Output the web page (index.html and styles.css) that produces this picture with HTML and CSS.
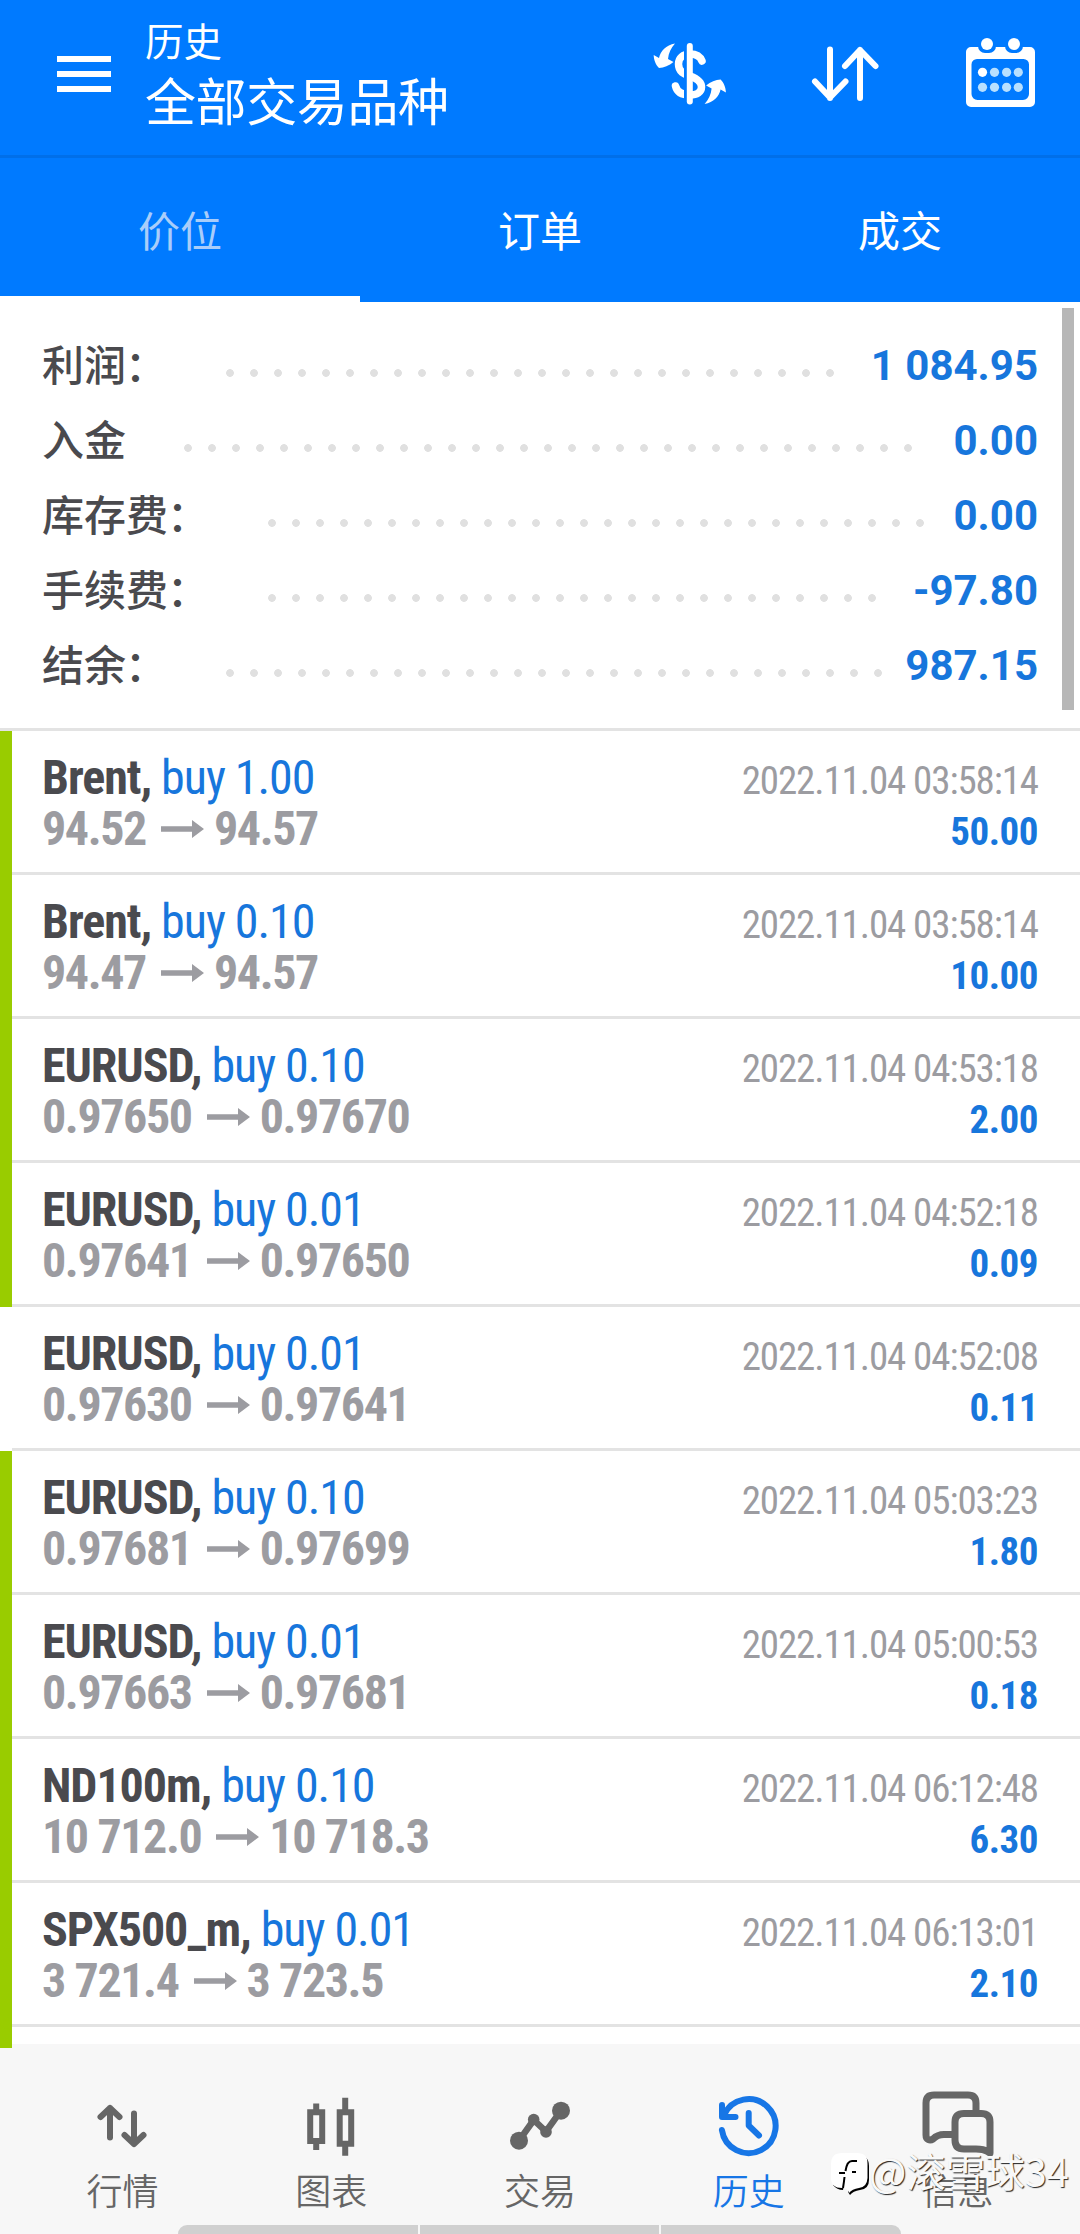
FILE: index.html
```html
<!DOCTYPE html>
<html lang="zh-CN">
<head>
<meta charset="utf-8">
<title>历史</title>
<link rel="stylesheet" href="styles.css">
</head>
<body>
<div class="app">
  <header class="topbar">
    <div class="menu"><i></i><i></i><i></i></div>
    <div class="titles">
      <div class="title">历史</div>
      <div class="subtitle">全部交易品种</div>
    </div>
    <div class="actions">
      <svg width="80" height="72" viewBox="650 38 80 72">
        <path d="M702 61C700 56 695 54 690 54C683 54 678.500 58 678.500 64C678.500 72 684 74 690 76C698 79 701.500 82 701.500 87C701.500 92 697 95 690 95C682 95 677 92 675.500 86" fill="none" stroke="#fff" stroke-width="7.500" stroke-linecap="round"/>
        <path d="M684 45h3v60h-3z" fill="#007aff"/>
        <path d="M689.800 46V101.500" stroke="#fff" stroke-width="6" stroke-linecap="round"/>
        <path id="swap" d="M675 43.500C666 45 660.500 51 659 58L653.700 55C653.700 60 656 65 659 68C664 68 669 65.500 673.500 62L668 59C668.500 53 671 48 675 43.500Z" fill="#fff"/>
        <use href="#swap" transform="rotate(180 689.800 73.700)"/>
      </svg>
      <svg width="80" height="72" viewBox="806 38 80 72">
        <path d="M831 49.500V98M816 81.500L831 97.500L846.500 81.500M861 98V50M846 66L861 50L876.500 66" fill="none" stroke="#fff" stroke-width="6" stroke-linecap="round" stroke-linejoin="round"/>
      </svg>
      <svg width="80" height="72" viewBox="960 38 80 72">
        <path d="M971 47H1030a5 5 0 0 1 5 5V102a5 5 0 0 1-5 5H971a5 5 0 0 1-5-5V52a5 5 0 0 1 5-5ZM977 59a5.500 5.500 0 0 0-5.500 5.500V94a6 6 0 0 0 6 6H1023a6 6 0 0 0 6-6V64.500a5.500 5.500 0 0 0-5.500-5.500Z" fill="#fff" fill-rule="evenodd"/>
        <g fill="#007aff"><rect x="978" y="36" width="18" height="17" rx="7"/><rect x="1005" y="36" width="18" height="17" rx="7"/></g>
        <g fill="#fff"><circle cx="987" cy="44" r="6"/><circle cx="1014" cy="44" r="6"/><circle cx="982.500" cy="72.300" r="4.600"/></g>
        <g fill="#b8e0ff"><circle cx="994.500" cy="72.300" r="4.600"/><circle cx="1006.600" cy="72.300" r="4.600"/><circle cx="1018.300" cy="72.300" r="4.600"/><circle cx="982.500" cy="87.300" r="4.600"/><circle cx="994.500" cy="87.300" r="4.600"/><circle cx="1006.600" cy="87.300" r="4.600"/><circle cx="1018.300" cy="87.300" r="4.600"/></g>
      </svg>
    </div>
  </header>
  <nav class="tabs">
    <div class="tab active">价位</div>
    <div class="tab">订单</div>
    <div class="tab">成交</div>
  </nav>
  <section class="summary">
    <div class="sum"><span>利润<em>：</em></span><i style="--dots:26"></i><b>1 084.95</b></div>
    <div class="sum"><span>入金</span><i style="--dots:31"></i><b>0.00</b></div>
    <div class="sum"><span>库存费<em>：</em></span><i style="--dots:28"></i><b>0.00</b></div>
    <div class="sum"><span>手续费<em>：</em></span><i style="--dots:26"></i><b>-97.80</b></div>
    <div class="sum"><span>结余<em>：</em></span><i style="--dots:28"></i><b>987.15</b></div>
    <div class="scrollbar"></div>
  </section>
  <main class="deals">
    <div class="deal tp"><div class="left"><div class="name"><b>Brent,</b> buy 1.00</div><div class="prices">94.52 <svg class="arrow"><use href="#arrow"/></svg> 94.57</div></div><div class="right"><div class="date">2022.11.04 03:58:14</div><div class="profit">50.00</div></div></div>
    <div class="deal tp"><div class="left"><div class="name"><b>Brent,</b> buy 0.10</div><div class="prices">94.47 <svg class="arrow"><use href="#arrow"/></svg> 94.57</div></div><div class="right"><div class="date">2022.11.04 03:58:14</div><div class="profit">10.00</div></div></div>
    <div class="deal tp"><div class="left"><div class="name"><b>EURUSD,</b> buy 0.10</div><div class="prices">0.97650 <svg class="arrow"><use href="#arrow"/></svg> 0.97670</div></div><div class="right"><div class="date">2022.11.04 04:53:18</div><div class="profit">2.00</div></div></div>
    <div class="deal tp"><div class="left"><div class="name"><b>EURUSD,</b> buy 0.01</div><div class="prices">0.97641 <svg class="arrow"><use href="#arrow"/></svg> 0.97650</div></div><div class="right"><div class="date">2022.11.04 04:52:18</div><div class="profit">0.09</div></div></div>
    <div class="deal"><div class="left"><div class="name"><b>EURUSD,</b> buy 0.01</div><div class="prices">0.97630 <svg class="arrow"><use href="#arrow"/></svg> 0.97641</div></div><div class="right"><div class="date">2022.11.04 04:52:08</div><div class="profit">0.11</div></div></div>
    <div class="deal tp"><div class="left"><div class="name"><b>EURUSD,</b> buy 0.10</div><div class="prices">0.97681 <svg class="arrow"><use href="#arrow"/></svg> 0.97699</div></div><div class="right"><div class="date">2022.11.04 05:03:23</div><div class="profit">1.80</div></div></div>
    <div class="deal tp"><div class="left"><div class="name"><b>EURUSD,</b> buy 0.01</div><div class="prices">0.97663 <svg class="arrow"><use href="#arrow"/></svg> 0.97681</div></div><div class="right"><div class="date">2022.11.04 05:00:53</div><div class="profit">0.18</div></div></div>
    <div class="deal tp"><div class="left"><div class="name"><b>ND100m,</b> buy 0.10</div><div class="prices">10 712.0 <svg class="arrow"><use href="#arrow"/></svg> 10 718.3</div></div><div class="right"><div class="date">2022.11.04 06:12:48</div><div class="profit">6.30</div></div></div>
    <div class="deal tp"><div class="left"><div class="name"><b>SPX500_m,</b> buy 0.01</div><div class="prices">3 721.4 <svg class="arrow"><use href="#arrow"/></svg> 3 723.5</div></div><div class="right"><div class="date">2022.11.04 06:13:01</div><div class="profit">2.10</div></div></div>
    <div class="deal tp"></div>
  </main>
  <footer class="bottom">
    <div class="item">
      <svg width="84" height="72" viewBox="80 2090 84 72"><path d="M110 2108V2137.500M100.500 2117L110 2108L119.500 2117M134 2113.500V2143.500M124.500 2135L134 2144L143.500 2135" fill="none" stroke="#666" stroke-width="6" stroke-linecap="round" stroke-linejoin="round"/></svg>
      <span>行情</span>
    </div>
    <div class="item">
      <svg width="84" height="72" viewBox="289.300 2090 84 72"><path d="M310.500 2112.300h12v28.700h-12zM340 2112.300h11.500v31.500H340zM316.500 2103.500v6M316.500 2144v6M345.500 2097.700v12M345.500 2146v9.700" fill="none" stroke="#666" stroke-width="6"/></svg>
      <span>图表</span>
    </div>
    <div class="item">
      <svg width="84" height="72" viewBox="498 2090 84 72"><path d="M519 2140.700L533.700 2120L546 2131.500L561 2110.700" fill="none" stroke="#666" stroke-width="6.500"/><g fill="#666"><circle cx="519" cy="2140.700" r="9"/><circle cx="533.700" cy="2119.500" r="5.800"/><circle cx="546" cy="2132" r="5.800"/><circle cx="561" cy="2110.700" r="9"/></g></svg>
      <span>交易</span>
    </div>
    <div class="item current">
      <svg width="84" height="72" viewBox="707 2090 84 72"><path d="M721.900 2130A27 27 0 1 0 724 2115M722 2105V2117H735.500M748.700 2113V2125.500L759 2135.500" fill="none" stroke="#1776e6" stroke-width="6" stroke-linecap="round" stroke-linejoin="round"/></svg>
      <span>历史</span>
    </div>
    <div class="item">
      <svg width="84" height="72" viewBox="916 2090 84 72"><path d="M976 2111V2103Q976 2095 968 2095H934Q926 2095 926 2103V2135C926 2140 930 2141 933 2139C936 2136 939 2134.500 944 2134.500H952M964 2113.500H981Q990 2113.500 990 2122V2153C986 2151 986 2149 976 2149H964Q955 2149 955 2140V2122Q955 2113.500 964 2113.500Z" fill="none" stroke="#666" stroke-width="7" stroke-linejoin="round"/></svg>
      <span>信息</span>
    </div>
    <div class="handle"><i></i><i></i><i></i></div>
    <div class="watermark">
      <svg width="39" height="46" viewBox="0 0 39 46"><path d="M26 3Q38 3 38 14V28Q38 37 29 38Q22 39 19 43L17 40Z" fill="#000"/><path d="M2 33Q6 38 12 38L13 33Z" fill="#000"/><path d="M11 1H26Q37 1 36.500 12V26Q36 35 28 36Q21 37 18 41Q17 36 11 36Q0 36 0 26V12Q0 1 11 1Z" fill="#fff"/><path d="M14.500 19Q16 9 21 9H26M8 21H14M12 36Q13 30 13.500 25M21 20H25" fill="none" stroke="#000" stroke-width="2"/></svg>
      <span>@滚雪球34</span>
    </div>
  </footer>
</div>
<svg width="0" height="0" class="defs"><symbol id="arrow" viewBox="0 0 43 18"><path d="M0 6.300H31V0L43 9L31 18V11.700H0Z" fill="#9c9ca1"/></symbol></svg>
</body>
</html>
```

FILE: styles.css
```css
* { box-sizing: border-box; }
body { margin: 0; background: #fff; font-family: Roboto, "Noto Sans CJK SC", sans-serif; }
i, em { font-style: normal; }
svg { display: block; flex: none; }
.defs { position: absolute; }
.app { width: 1080px; height: 2234px; overflow: hidden; display: flex; flex-direction: column; }

.topbar { height: 158px; flex: none; background: #007aff; border-bottom: 3px solid #006fe9; display: flex; color: #fff; }
.menu { margin: 56px 0 0 57px; width: 54px; height: 36px; display: flex; flex-direction: column; justify-content: space-between; }
.menu i { height: 6px; background: #fff; }
.titles { margin-left: 34px; width: 320px; padding-top: 18px; white-space: nowrap; }
.title { font-size: 38.500px; line-height: 50px; }
.subtitle { font-size: 51px; line-height: 60px; margin-top: 6px; letter-spacing: -0.400px; }
.actions { margin: 38px 40px 0 auto; display: flex; gap: 75px; }

.tabs { height: 144px; flex: none; background: #007aff; display: flex; color: #fff; font-size: 42px; line-height: 149px; text-align: center; }
.tab { flex: 1; }
.tab.active { color: #a9cdfa; border-bottom: 6px solid #fff; }

.summary { position: relative; flex: none; height: 429px; padding: 26px 42px 0; border-bottom: 3px solid #e3e3e3; }
.sum { display: flex; height: 75px; line-height: 75px; font-size: 42px; align-items: center; color: #4a4a4e; }
.sum span { font-weight: 500; margin-top: 2px; }
.sum em { margin: 0 1px 0 -1px; }
.sum i { width: calc(var(--dots) * 24px); height: 8px; margin: 14px 0 0 50px; background: radial-gradient(circle, #e0e0e0 3.500px, transparent 4.200px) 0 0 / 24px 8px; }
.sum b { margin-left: auto; color: #1776dc; font-weight: 700; }
.scrollbar { position: absolute; right: 6px; top: 6px; width: 12px; height: 402px; background: #b7b7b7; }

.deals { height: 1317px; flex: none; overflow: hidden; position: relative; z-index: 1; }
.deal { --line: linear-gradient(#e3e3e3, #e3e3e3) 12px 100% / 100% 3px no-repeat; height: 144px; background: var(--line); padding: 21px 42px 0; display: flex; justify-content: space-between; font-stretch: 75%; white-space: nowrap; line-height: 51px; font-family: "Roboto Condensed", Roboto, sans-serif; }
.tp { background: linear-gradient(#99cc00, #99cc00) 0 0 / 12px 100% no-repeat, var(--line); }
.name { font-size: 48px; color: #1776dc; letter-spacing: -1.050px; }
.name b { color: #4a4a4e; }
.prices { font-size: 48px; font-weight: 700; color: #9c9ca1; display: flex; align-items: center; gap: 15px; letter-spacing: -1.400px; }
.arrow { width: 43px; height: 18px; margin-right: -5px; }
.right { text-align: right; font-size: 39px; padding-top: 4px; }
.date { color: #9c9ca1; letter-spacing: -1.100px; }
.profit { color: #1776dc; font-weight: 700; letter-spacing: -0.500px; }

.bottom { position: relative; flex: none; height: 190px; margin-top: -4px; padding: 46px 18px 0; background: #f7f7f7; display: flex; }
.item { flex: 1; display: flex; flex-direction: column; align-items: center; color: #666; font-size: 36px; line-height: 50px; font-weight: 350; }
.item span { margin-top: 6px; }
.current { color: #1776e6; }
.handle { position: absolute; left: 178px; bottom: 0; width: 723px; height: 9px; display: flex; gap: 2px; border-radius: 9px 9px 0 0; overflow: hidden; }
.handle i { flex: 1; background: #d0d0d0; }
.watermark { position: absolute; left: 831px; top: 108px; display: flex; align-items: center; font-family: "Noto Sans CJK SC", sans-serif; font-size: 39.500px; line-height: 40px; color: #f9f9f9; text-shadow: 1px 1px 1px #222; white-space: nowrap; }
.watermark span { margin: -11px 0 0 -1px; }
```
